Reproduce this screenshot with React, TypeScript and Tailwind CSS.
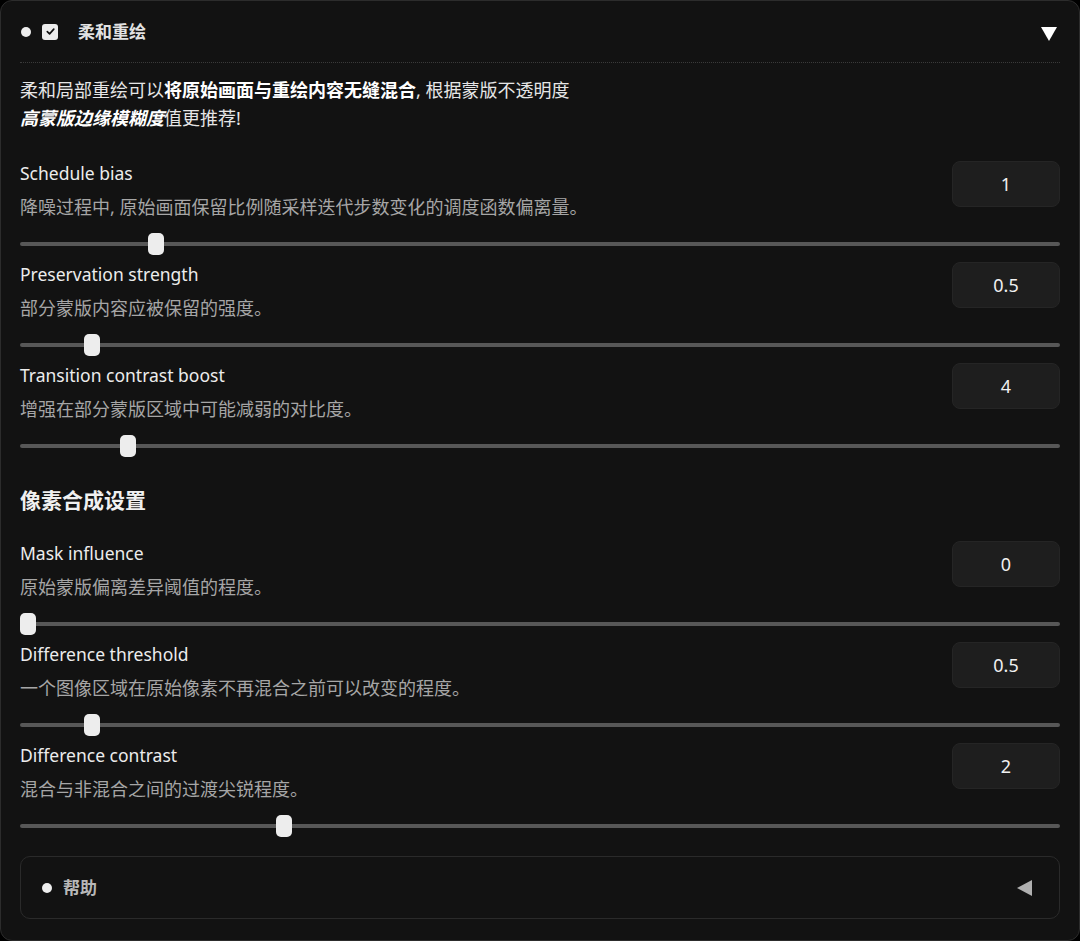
import React from "react";

type Param = {
  label: string;
  desc: string;
  value: number;
  min: number;
  max: number;
};

const softParams: Param[] = [
  { label: "Schedule bias", desc: "降噪过程中, 原始画面保留比例随采样迭代步数变化的调度函数偏离量。", value: 1, min: 0, max: 8 },
  { label: "Preservation strength", desc: "部分蒙版内容应被保留的强度。", value: 0.5, min: 0, max: 8 },
  { label: "Transition contrast boost", desc: "增强在部分蒙版区域中可能减弱的对比度。", value: 4, min: 0, max: 41 },
];

const pixelParams: Param[] = [
  { label: "Mask influence", desc: "原始蒙版偏离差异阈值的程度。", value: 0, min: 0, max: 1 },
  { label: "Difference threshold", desc: "一个图像区域在原始像素不再混合之前可以改变的程度。", value: 0.5, min: 0, max: 8 },
  { label: "Difference contrast", desc: "混合与非混合之间的过渡尖锐程度。", value: 2, min: 0, max: 8 },
];

const font = { fontFamily: '"Noto Sans", "Noto Sans CJK SC", sans-serif' };

function SliderRow({ p }: { p: Param }) {
  const pct = (p.value - p.min) / (p.max - p.min);
  return (
    <div className="mb-[7px]">
      <div className="flex items-start justify-between">
        <div>
          <div className="text-[17.5px] leading-[24px] text-[#ececec]">{p.label}</div>
          <div className="mt-[10px] text-[18px] leading-[24px] text-[#a6a6a6]">{p.desc}</div>
        </div>
        <div className="flex h-[46px] w-[108px] items-center justify-center rounded-[8px] border border-[#252525] bg-[#1e1e1e] text-[18px] text-[#f0f0f0]">
          {p.value}
        </div>
      </div>
      <div className="relative mt-[14px] h-[22px]">
        <div className="absolute left-0 right-0 top-[9px] h-[4px] rounded-full bg-[#575757]" />
        <div
          className="absolute top-0 h-[22px] w-[16px] rounded-[5px] bg-[#ededed]"
          style={{ left: `calc(${pct} * (100% - 16px))` }}
        />
      </div>
    </div>
  );
}

export default function App() {
  return (
    <div className="min-h-screen bg-black" style={font}>
      <div className="h-[941px] rounded-[12px] border border-[#2c2c2c] bg-[#121212] px-[19px]">
        {/* Header */}
        <div className="flex h-[62px] items-center border-b border-dotted border-[#3a3a3a]">
          <span className="ml-[1px] h-[10px] w-[10px] rounded-full bg-[#eeeeee]" />
          <span className="ml-[11px] flex h-[16px] w-[16px] items-center justify-center rounded-[3px] bg-[#ededed]">
            <svg width="11" height="11" viewBox="0 0 12 12">
              <path d="M2.5 6.2 L5 8.6 L9.6 3.4" fill="none" stroke="#111" strokeWidth="1.8" strokeLinecap="round" strokeLinejoin="round" />
            </svg>
          </span>
          <span className="ml-[20px] text-[17px] font-bold text-[#e2e2e2]">柔和重绘</span>
          <svg className="ml-auto mr-[3px] mt-[5px]" width="16" height="14" viewBox="0 0 16 14">
            <path d="M0 0 H16 L8 14 Z" fill="#ffffff" />
          </svg>
        </div>

        {/* Intro */}
        <p className="mt-[13px] text-[18px] leading-[28px] text-[#e6e6e6]">
          柔和局部重绘可以<b className="font-bold text-white">将原始画面与重绘内容无缝混合</b>, 根据蒙版不透明度
          <br />
          <b className="font-bold italic text-white">高蒙版边缘模糊度</b>值更推荐!
        </p>

        <div className="mt-[29px]">
          {softParams.map((p) => (
            <SliderRow key={p.label} p={p} />
          ))}
        </div>

        <h2 className="mt-[29px] text-[21px] font-bold leading-[28px] text-[#f0f0f0]">像素合成设置</h2>

        <div className="mt-[27px]">
          {pixelParams.map((p) => (
            <SliderRow key={p.label} p={p} />
          ))}
        </div>

        {/* Help */}
        <div className="mt-[19px] flex h-[63px] items-center rounded-[10px] border border-[#2a2a2a] px-[21px]">
          <span className="h-[10px] w-[10px] rounded-full bg-[#eeeeee]" />
          <span className="ml-[11px] text-[17px] font-bold text-[#b8b8b8]">帮助</span>
          <svg className="ml-auto mr-[6px]" width="15" height="16" viewBox="0 0 15 16">
            <path d="M15 0 V16 L0 8 Z" fill="#b0b0b0" />
          </svg>
        </div>
      </div>
    </div>
  );
}
